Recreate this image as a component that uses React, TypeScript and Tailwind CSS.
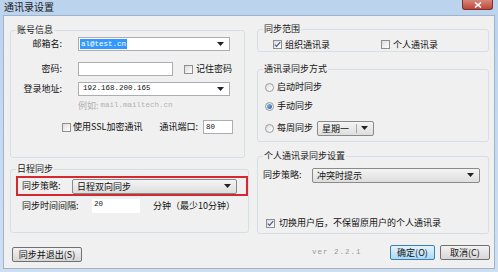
import React from "react";

const cjk = "font-['Noto_Sans_CJK_SC','Noto_Sans',sans-serif]";
const mono = "font-['Liberation_Mono','DejaVu_Sans_Mono',monospace]";

const Check = ({ checked = false }: { checked?: boolean }) => (
  <span className="w-[9px] h-[9px] shrink-0 border border-[#8e8f8f] bg-linear-to-br from-[#dcdcdc] to-white flex items-center justify-center">
    {checked && (
      <svg width="7" height="7" viewBox="0 0 7 7">
        <path d="M0.8 3.6 L2.6 5.4 L6.2 1.2" fill="none" stroke="#4a5f97" strokeWidth="1.3" />
      </svg>
    )}
  </span>
);

const Radio = ({ checked = false }: { checked?: boolean }) => (
  <span className="w-[9px] h-[9px] shrink-0 rounded-full border border-[#9a9a9a] bg-linear-to-br from-[#dedede] to-white flex items-center justify-center">
    {checked && <span className="w-[5px] h-[5px] rounded-full bg-linear-to-br from-[#8fc0ef] to-[#2360a8]" />}
  </span>
);

const Arrow = () => (
  <svg width="7" height="4" viewBox="0 0 7 4" className="shrink-0">
    <path d="M0 0 H7 L3.5 4 Z" fill="#222" />
  </svg>
);

// editable combo: white field with a bare arrow
const EditCombo = ({ w, children }: { w: string; children: React.ReactNode }) => (
  <div className={`${w} h-[14px] bg-white border border-[#abadb3] flex items-center pl-[1px] pr-[5px]`}>
    <div className="flex-1 flex items-center">{children}</div>
    <Arrow />
  </div>
);

// drop-down list: grey button-like face
const ListCombo = ({ w, text, sep = false }: { w: string; text: string; sep?: boolean }) => (
  <div className={`${w} h-[15px] rounded-[2px] border border-[#8a8a8a] bg-linear-to-b from-[#f4f4f4] to-[#dedede] flex items-center pl-[4px] pr-[5px]`}>
    <span className="flex-1 text-[9px] leading-none text-[#111]">{text}</span>
    {sep && <span className="w-px h-[9px] bg-[#a8a8a8] mr-[4px]" />}
    <Arrow />
  </div>
);

const Button = ({ w, children, primary = false }: { w: string; children: React.ReactNode; primary?: boolean }) => (
  <div
    className={`${w} h-[15px] rounded-[2px] border flex items-center justify-center text-[9px] leading-none text-[#111] ${
      primary
        ? "border-[#3c7fb1] bg-linear-to-b from-[#e5f4fc] to-[#a7d9f5]"
        : "border-[#707070] bg-linear-to-b from-[#f2f2f2] to-[#d6d6d6]"
    }`}
  >
    {children}
  </div>
);

const Group = ({ title, className, children }: { title: string; className: string; children: React.ReactNode }) => (
  <fieldset className={`border border-[#d5dfe5] rounded-[3px] ${className}`}>
    <legend className="ml-[5px] px-[1px] text-[9px] leading-[12px] text-[#1a1a1a]">{title}</legend>
    {children}
  </fieldset>
);

export default function App() {
  return (
    <div className={`w-[498px] h-[272px] overflow-hidden flex flex-col bg-linear-to-b from-[#bcd3ee] to-[#cfdff2] ${cjk}`}>
      {/* title bar */}
      <div className="h-[15px] shrink-0 flex items-start justify-between">
        <span className="ml-[4px] text-[10px] leading-[13px] text-[#1b1b1b]">通讯录设置</span>
        <div className="mr-[5px] w-[31px] h-[10px] rounded-b-[3px] border border-t-0 border-[#7c3030] bg-linear-to-b from-[#d3867a] to-[#c14434] flex items-center justify-center">
          <svg width="8" height="6" viewBox="0 0 8 6">
            <path d="M1 0.5 L7 5.5 M7 0.5 L1 5.5" stroke="#fff" strokeWidth="1.6" />
          </svg>
        </div>
      </div>

      {/* dialog body */}
      <div className="flex-1 mx-[3px] mb-[3px] border border-[#9fb3c9] bg-[#f0f0f0] flex gap-[12px] pl-[6px] text-[9px] text-[#111]">
        {/* left column */}
        <div className="w-[235px] pt-[8px] flex flex-col">
          <Group title="账号信息" className="h-[134px]">
            <div className="mt-[1px] h-[14px] flex items-center">
              <span className="w-[51px] text-right">邮箱名:</span>
              <div className="ml-[16px]">
                <EditCombo w="w-[152px]">
                  <span className={`${mono} text-[7.5px] leading-[10px] px-[1px] bg-[#3399ff] text-white`}>al@test.cn</span>
                </EditCombo>
              </div>
            </div>
            <div className="mt-[11px] h-[14px] flex items-center">
              <span className="w-[51px] text-right">密码:</span>
              <div className="ml-[16px] w-[95px] h-[14px] bg-white border border-[#abadb3]" />
              <span className="ml-[11px]"><Check /></span>
              <span className="ml-[3px]">记住密码</span>
            </div>
            <div className="mt-[6px] h-[14px] flex items-center">
              <span className="w-[51px] text-right">登录地址:</span>
              <div className="ml-[16px]">
                <EditCombo w="w-[152px]">
                  <span className={`${mono} text-[7.5px] leading-none pl-[3px]`}>192.168.200.165</span>
                </EditCombo>
              </div>
            </div>
            <div className="mt-[5px] h-[10px] flex items-center pl-[67px] text-[#b0b0b0]">
              例如: <span className={`${mono} text-[7.5px] ml-[2px]`}>mail.mailtech.cn</span>
            </div>
            <div className="mt-[9px] h-[14px] flex items-center">
              <span className="ml-[51px]"><Check /></span>
              <span className="ml-[2px]">使用SSL加密通讯</span>
              <span className="ml-[17px]">通讯端口:</span>
              <div className={`ml-[5px] w-[30px] h-[14px] bg-white border border-[#abadb3] ${mono} text-[7.5px] leading-[12px] pl-[2px]`}>80</div>
            </div>
          </Group>

          <Group title="日程同步" className="mt-[5px] h-[70px]">
            <div className="mt-[1px] ml-[5px] w-[232px] h-[20px] border-2 border-[#d42a2f] flex items-center pl-[4px]">
              <span className="w-[50px]">同步策略:</span>
              <ListCombo w="w-[165px]" text="日程双向同步" />
            </div>
            <div className="mt-[3px] h-[14px] flex items-center">
              <span className="ml-[11px] w-[70px]">同步时间间隔:</span>
              <div className={`w-[48px] h-[14px] bg-white ${mono} text-[7.5px] leading-[10px] pl-[2px]`}>20</div>
              <span className="ml-[13px]">分钟（最少10分钟）</span>
            </div>
          </Group>

          <div className="mt-[14px] ml-[2px]">
            <Button w="w-[70px]">同步并退出(S)</Button>
          </div>
        </div>

        {/* right column */}
        <div className="w-[232px] pt-[7px] flex flex-col">
          <Group title="同步范围" className="h-[29px]">
            <div className="mt-[5px] h-[9px] flex items-center">
              <span className="ml-[15px]"><Check checked /></span>
              <span className="ml-[3px]">组织通讯录</span>
              <span className="ml-[51px]"><Check /></span>
              <span className="ml-[3px]">个人通讯录</span>
            </div>
          </Group>

          <Group title="通讯录同步方式" className="mt-[11px] h-[79px]">
            <div className="mt-[5px] h-[14px] flex items-center pl-[7px]">
              <Radio />
              <span className="ml-[3px]">启动时同步</span>
            </div>
            <div className="mt-[5px] h-[14px] flex items-center pl-[7px]">
              <Radio checked />
              <span className="ml-[3px]">手动同步</span>
            </div>
            <div className="mt-[8px] h-[14px] flex items-center pl-[7px]">
              <Radio />
              <span className="ml-[3px]">每周同步</span>
              <span className="ml-[4px]"><ListCombo w="w-[57px]" text="星期一" sep /></span>
            </div>
          </Group>

          <Group title="个人通讯录同步设置" className="mt-[8px] h-[84px]">
            <div className="mt-[6px] h-[14px] flex items-center">
              <span className="ml-[5px] w-[49px]">同步策略:</span>
              <ListCombo w="w-[168px]" text="冲突时提示" />
            </div>
            <div className="mt-[34px] h-[14px] flex items-center">
              <span className="ml-[8px]"><Check checked /></span>
              <span className="ml-[4px]">切换用户后，不保留原用户的个人通讯录</span>
            </div>
          </Group>

          <div className="mt-[11px] h-[15px] flex items-center">
            <span className={`ml-[55px] ${mono} text-[7.5px] text-[#9a9a9a] tracking-[1px]`}>ver 2.2.1</span>
            <span className="ml-auto"><Button w="w-[45px]" primary>确定(O)</Button></span>
            <span className="ml-[5px] mr-[-1px]"><Button w="w-[50px]">取消(C)</Button></span>
          </div>
        </div>
      </div>
    </div>
  );
}
